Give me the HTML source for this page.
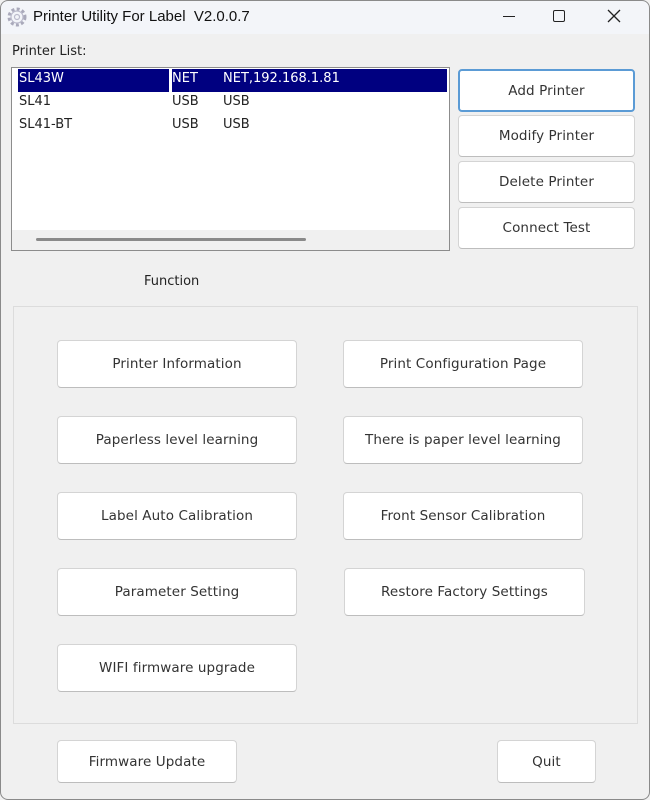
<!DOCTYPE html>
<html><head><meta charset="utf-8"><style>
*{margin:0;padding:0;box-sizing:border-box}
body{width:650px;height:800px;background:#f0f0f0;font-family:"DejaVu Sans","Liberation Sans",sans-serif;font-size:13px;color:#222;position:relative;overflow:hidden}
.win{position:absolute;left:0;top:0;width:650px;height:800px;border-radius:8px;background:#f0f0f0;overflow:hidden}
.frame{position:absolute;left:0;top:0;width:650px;height:800px;border:1px solid #8a8a8a;border-radius:8px;z-index:5;pointer-events:none}
.tb{position:absolute;left:0;top:0;width:650px;height:34px;background:#f3f5f9}
.a{position:absolute;white-space:nowrap}
.btn{position:absolute;background:#fff;border:1px solid #d4d4d4;border-bottom-color:#bdbdbd;border-radius:4px;display:flex;align-items:center;justify-content:center;font-size:13.5px;color:#333;letter-spacing:0.1px}
.t{font-family:"Liberation Sans",sans-serif}
</style></head><body><div class="win">
<div class="tb"></div>
<svg class="a" style="left:6px;top:6px" width="22" height="22" viewBox="0 0 22 22"><circle cx="11" cy="11" r="8" fill="none" stroke="#aab" stroke-width="3" stroke-dasharray="3 2.3"/><circle cx="11" cy="11" r="6" fill="none" stroke="#bbc" stroke-width="1.2"/><circle cx="11" cy="11" r="2.5" fill="none" stroke="#bbc" stroke-width="1.2"/></svg>
<div class="a t" style="left:33px;top:8px;font-size:15px;color:#111">Printer Utility For Label&nbsp; V2.0.0.7</div>
<div class="a" style="left:503px;top:16px;width:12px;height:1px;background:#222"></div>
<div class="a" style="left:553px;top:10px;width:12px;height:12px;border:1.3px solid #222;border-radius:2px"></div>
<svg class="a" style="left:607px;top:9px" width="14" height="14"><path d="M1 1L13 13M13 1L1 13" stroke="#222" stroke-width="1.3"/></svg>
<div class="a" style="left:12px;top:44px">Printer List:</div>
<div class="a" style="left:11px;top:67px;width:439px;height:184px;background:#fff;border:1px solid #8c8c8c">
 <div class="a" style="left:6px;top:1px;width:151px;height:23px;background:#000080"></div>
 <div class="a" style="left:160px;top:1px;width:275px;height:23px;background:#000080"></div>
 <div class="a" style="left:7px;top:3px;color:#fff">SL43W</div>
 <div class="a" style="left:160px;top:3px;color:#fff">NET</div>
 <div class="a" style="left:211px;top:3px;color:#fff">NET,192.168.1.81</div>
 <div class="a" style="left:7px;top:26px">SL41</div><div class="a" style="left:160px;top:26px">USB</div><div class="a" style="left:211px;top:26px">USB</div>
 <div class="a" style="left:7px;top:49px">SL41-BT</div><div class="a" style="left:160px;top:49px">USB</div><div class="a" style="left:211px;top:49px">USB</div>
 <div class="a" style="left:0;top:162px;width:437px;height:20px;background:#f0f0f0"></div>
 <div class="a" style="left:24px;top:170px;width:270px;height:3px;background:#8a8a8a;border-radius:2px"></div>
</div>
<div class="btn" style="left:458px;top:69px;width:177px;height:43px;border:2px solid #5b9bd5">Add Printer</div>
<div class="btn" style="left:458px;top:115px;width:177px;height:42px">Modify Printer</div>
<div class="btn" style="left:458px;top:161px;width:177px;height:42px">Delete Printer</div>
<div class="btn" style="left:458px;top:207px;width:177px;height:42px">Connect Test</div>
<div class="a" style="left:144px;top:274px">Function</div>
<div class="a" style="left:13px;top:306px;width:625px;height:418px;border:1px solid #dcdcdc"></div>
<div class="btn" style="left:57px;top:340px;width:240px;height:48px">Printer Information</div>
<div class="btn" style="left:343px;top:340px;width:240px;height:48px">Print Configuration Page</div>
<div class="btn" style="left:57px;top:416px;width:240px;height:48px">Paperless level learning</div>
<div class="btn" style="left:343px;top:416px;width:240px;height:48px">There is paper level learning</div>
<div class="btn" style="left:57px;top:492px;width:240px;height:48px">Label Auto Calibration</div>
<div class="btn" style="left:343px;top:492px;width:240px;height:48px">Front Sensor Calibration</div>
<div class="btn" style="left:57px;top:568px;width:240px;height:48px">Parameter Setting</div>
<div class="btn" style="left:344px;top:568px;width:241px;height:48px">Restore Factory Settings</div>
<div class="btn" style="left:57px;top:644px;width:240px;height:48px">WIFI firmware upgrade</div>
<div class="btn" style="left:57px;top:740px;width:180px;height:43px">Firmware Update</div>
<div class="btn" style="left:497px;top:740px;width:99px;height:43px">Quit</div>
</div><div class="frame"></div></body></html>
